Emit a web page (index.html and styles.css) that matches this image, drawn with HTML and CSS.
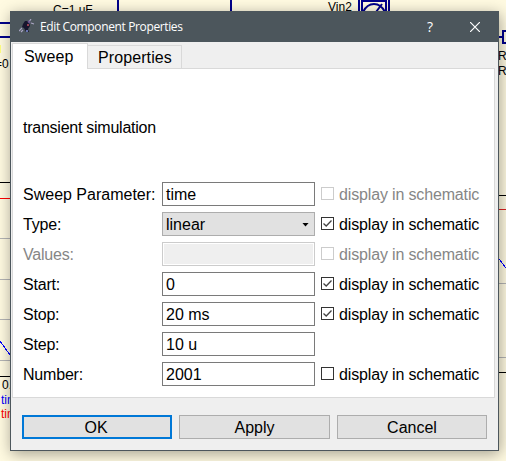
FILE: index.html
```html
<!DOCTYPE html>
<html lang="en">
<head>
<meta charset="utf-8">
<title>Edit Component Properties</title>
<link rel="stylesheet" href="styles.css">
</head>
<body>
<svg class="schematic" width="506" height="461" viewBox="0 0 506 461" aria-hidden="true">
  <g fill="none" stroke="#00008b" stroke-width="2">
    <path d="M0 23H12M0 37H12M118 0V12M231 0V12M359 0V12M362 12V1H386V12M389 0V12M363 12Q367 4 374 4Q381 4 385 12M376 12L382 4M498 37H503M506 31H503V43H506"/>
  </g>
  <path fill="#ffff80" d="M0 45h1v8H0z"/>
  <g fill="none" shape-rendering="crispEdges">
    <path stroke="#000" d="M0 182.500H10M499 195.500H506M0 376.500H10M499 372.500H506"/>
    <path stroke="#f00" d="M0 198.500H10"/>
    <path stroke="#d22" d="M499 209.500H506"/>
    <path stroke="#b4b4b4" d="M0 238.500H10M0 279.500H10M0 319.500H10M0 360.500H10M499 283.500H506M499 357.500H506"/>
    <path stroke="#00f" d="M0 341L10 355M499 259L506 268"/>
  </g>
  <g class="schematic-text">
    <text x="53" y="14">C=1 uF</text>
    <text x="328" y="11">Vin2</text>
    <text x="-5" y="68">=0</text>
    <text x="498" y="60">R</text>
    <text x="498" y="75">R</text>
    <text x="2" y="389">0.</text>
    <text x="1" y="404" fill="#00f">time</text>
    <text x="1" y="418" fill="#f00">time</text>
  </g>
</svg>
<main class="dialog">
  <header class="titlebar">
    <svg class="app-icon" width="16" height="16" viewBox="0 0 16 16">
      <path d="M4 5L6 2L10 2L11 7L9 10L10 13L7 13L5 9L3 8Z" fill="#17152e"/>
      <path d="M10 3L12 0M12 4L15 5M3 9L0 12M4 11L2 13" stroke="#aaa6c4" stroke-width="1.200" fill="none"/>
      <path d="M9 2L11 4" stroke="#6a5590" stroke-width="2"/>
      <path d="M8 5h2v2H8z" fill="#9a4151"/><path d="M7 11h2v2H7z" fill="#6874b0"/>
    </svg>
    <h1>Edit Component Properties</h1>
    <span class="help">?</span>
    <svg class="close" width="10" height="10" viewBox="0 0 10 10"><path d="M0 0L10 10M10 0L0 10" stroke="#fff" stroke-width="1.200"/></svg>
  </header>
  <nav class="tabs"><span class="tab active">Sweep</span><span class="tab">Properties</span></nav>
  <section class="panel">
    <p class="heading">transient simulation</p>
    <div class="row"><span class="wide">Sweep Parameter:</span><div class="field">time</div><label class="check disabled"><i class="box"></i><span>display in schematic</span></label></div>
    <div class="row"><span>Type:</span><div class="field select">linear<i class="arrow"></i></div><label class="check"><i class="box"><svg width="11" height="11"><path d="M1.500 5.500L4.200 8L9.500 2.500"/></svg></i><span>display in schematic</span></label></div>
    <div class="row"><span class="muted">Values:</span><div class="field off"></div><label class="check disabled"><i class="box"></i><span>display in schematic</span></label></div>
    <div class="row"><span>Start:</span><div class="field">0</div><label class="check"><i class="box"><svg width="11" height="11"><path d="M1.500 5.500L4.200 8L9.500 2.500"/></svg></i><span>display in schematic</span></label></div>
    <div class="row"><span>Stop:</span><div class="field">20 ms</div><label class="check"><i class="box"><svg width="11" height="11"><path d="M1.500 5.500L4.200 8L9.500 2.500"/></svg></i><span>display in schematic</span></label></div>
    <div class="row"><span>Step:</span><div class="field">10 u</div></div>
    <div class="row"><span>Number:</span><div class="field">2001</div><label class="check"><i class="box"></i><span>display in schematic</span></label></div>
  </section>
  <footer class="actions"><button class="default">OK</button><button>Apply</button><button>Cancel</button></footer>
</main>
</body>
</html>
```
FILE: styles.css
```css
* { box-sizing: border-box; }
body {
  margin: 0;
  width: 506px;
  height: 461px;
  overflow: hidden;
  padding: 11px 0 0 10px;
  background: #fffae1;
  color: #000;
  font: 16px/22px "Liberation Sans", Arial, sans-serif;
}
.schematic { position: absolute; left: 0; top: 0; }
.schematic-text { font-size: 12px; }
.dialog {
  position: relative;
  width: 489px;
  height: 440px;
  background: #efefef;
  border: 1px solid #4c565c;
  box-shadow: 1px 3px 14px rgba(0, 0, 0, .36);
}
.titlebar {
  display: flex;
  align-items: center;
  height: 30px;
  padding-left: 8px;
  background: #4c565c;
  color: #fff;
}
.titlebar h1 {
  margin: 0 0 0 5px;
  width: 387px;
  font: 12px/18px "Open Sans", sans-serif;
  letter-spacing: -.37px;
  white-space: nowrap;
}
.help { width: 14px; font: 14px/18px "Open Sans", sans-serif; }
.close { margin-left: 29px; margin-top: -1px; }
.tabs { display: flex; align-items: flex-end; height: 26px; padding: 1px 0 0 1px; }
.tab {
  height: 23px;
  width: 94px;
  padding-left: 10px;
  border: 1px solid #d9d9d9;
  border-left: 0;
  border-bottom: 0;
  background: #f0f0f0;
  line-height: 23px;
  letter-spacing: .1px;
}
.tab.active {
  position: relative;
  z-index: 1;
  width: 76px;
  height: 26px;
  margin-bottom: -1px;
  padding-left: 11px;
  border-left: 1px solid #d9d9d9;
  background: #fff;
  line-height: 25px;
}
.panel {
  width: 483px;
  height: 330px;
  margin-left: 1px;
  padding: 48px 0 0 10px;
  border: 1px solid #d9d9d9;
  background: #fff;
}
.heading { margin: 0 0 43px; letter-spacing: -.25px; }
.row { display: flex; align-items: center; height: 24px; margin-bottom: 6px; }
.row > span { width: 139px; padding-top: 1px; letter-spacing: -.2px; white-space: nowrap; }
.row > .wide { letter-spacing: 0; }
.muted, .disabled { color: #868686; }
.field {
  display: flex;
  align-items: center;
  width: 153px;
  height: 24px;
  padding: 1px 0 0 3px;
  border: 1px solid #7a7a7a;
  background: #fff;
}
.select { justify-content: space-between; padding-right: 5px; border-color: #adadad; background: #e1e1e1; }
.arrow { width: 7px; height: 4px; background: #000; clip-path: polygon(0 0, 100% 0, 50% 100%); }
.off { border-color: #ccc; background: #efefef; box-shadow: inset 0 0 0 1px #fff; }
.check { display: flex; align-items: center; gap: 5px; margin-left: 6px; white-space: nowrap; }
.check span { padding-top: 1px; letter-spacing: -.15px; }
.box { width: 13px; height: 13px; margin-top: -1px; border: 1px solid #333; background: #fff; }
.box svg { display: block; fill: none; stroke: #444; stroke-width: 1.300; }
.disabled .box { border-color: #ccc; }
.actions { display: flex; padding: 17px 0 0 11px; }
button {
  width: 150px;
  height: 24px;
  padding: 1px 0 0;
  border: 1px solid #adadad;
  border-radius: 0;
  background: #e1e1e1;
  color: #000;
  font: inherit;
}
button:nth-child(2) { width: 151px; margin: 0 7px; }
button.default { border: 2px solid #0078d7; padding: 0 2px 0 0; }
```
